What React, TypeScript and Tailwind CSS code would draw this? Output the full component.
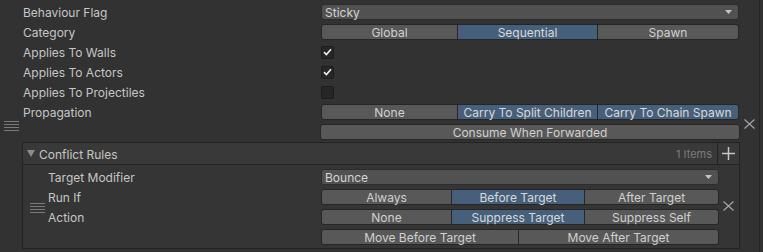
import React from "react";

const font = { fontFamily: "Inter, 'Noto Sans', sans-serif" };

function Handle() {
  return (
    <svg width="15" height="10" viewBox="0 0 15 10" className="block">
      <rect x="0" y="0" width="15" height="1" fill="#7a7a7a" />
      <rect x="0" y="3" width="15" height="1" fill="#7a7a7a" />
      <rect x="0" y="6" width="15" height="1" fill="#7a7a7a" />
      <rect x="0" y="9" width="15" height="1" fill="#7a7a7a" />
    </svg>
  );
}

function XIcon() {
  return (
    <svg width="11" height="10" viewBox="0 0 11 10" className="block">
      <path d="M0.5 0.5 L10.5 9.5 M10.5 0.5 L0.5 9.5" stroke="#a8a8a8" strokeWidth="1.1" fill="none" />
    </svg>
  );
}

function Arrow() {
  return (
    <svg width="7" height="4" viewBox="0 0 7 4" className="block">
      <path d="M0 0 L7 0 L3.5 4 Z" fill="#c4c4c4" />
    </svg>
  );
}

function Dropdown({ value }: { value: string }) {
  return (
    <div className="h-[16px] flex items-center justify-between rounded-[3px] bg-[#515151] border border-[#2c2c2c] pl-[3px] pr-[6px] text-[#d4d4d4] w-full">
      <span className="leading-none pt-[2px]">{value}</span>
      <Arrow />
    </div>
  );
}

function Segments({ items, selected, widths }: { items: string[]; selected: number[]; widths: string[] }) {
  return (
    <div className="h-[16px] flex w-full">
      {items.map((it, i) => {
        const sel = selected.includes(i);
        const first = i === 0;
        const last = i === items.length - 1;
        return (
          <div
            key={it}
            className={
              widths[i] +
              " flex items-center justify-center pt-[2px] border-y border-r border-[#262626] leading-none " +
              (first ? "border-l rounded-l-[3px] " : "") +
              (last ? "rounded-r-[3px] " : "") +
              (sel ? "bg-[#46607c] text-[#d8d8d8]" : "bg-[#585858] text-[#d0d0d0]")
            }
          >
            {it}
          </div>
        );
      })}
    </div>
  );
}

function Checkbox({ checked }: { checked: boolean }) {
  return (
    <div className="w-[13px] h-[13px] rounded-[2px] bg-[#262626] border border-[#1c1c1c] flex items-center justify-center">
      {checked && (
        <svg width="9" height="8" viewBox="0 0 9 8" className="block">
          <path d="M1 4.2 L3.4 6.5 L8 1.2" stroke="#f0f0f0" strokeWidth="1.6" fill="none" />
        </svg>
      )}
    </div>
  );
}

function Row({ label, children, labelW }: { label?: string; children: React.ReactNode; labelW: string }) {
  return (
    <div className="h-[20px] flex items-center">
      <div className={labelW + " shrink-0 text-[#c6c6c6] leading-none pt-[2px]"}>{label}</div>
      <div className="flex-1 flex items-center">{children}</div>
    </div>
  );
}

const outerW = ["w-[137px]", "w-[140px]", "flex-1"];
const innerW = ["w-[131px]", "w-[133px]", "flex-1"];

export default function App() {
  return (
    <div className="w-[763px] h-[252px] bg-[#323232] overflow-hidden text-[12px] relative" style={font}>
      <div className="absolute right-[3px] top-0 bottom-0 w-px bg-[#262626]" />
      <div className="flex items-center h-full">
        <div className="w-[22px] shrink-0 flex justify-center pl-[1px]">
          <Handle />
        </div>
        <div className="w-[718px] shrink-0 flex flex-col pt-[2px] h-full">
          <div className="pr-[1px]">
            <Row label="Behaviour Flag" labelW="w-[299px] pl-[1px]">
              <Dropdown value="Sticky" />
            </Row>
            <Row label="Category" labelW="w-[299px] pl-[1px]">
              <Segments items={["Global", "Sequential", "Spawn"]} selected={[1]} widths={outerW} />
            </Row>
            <Row label="Applies To Walls" labelW="w-[299px] pl-[1px]">
              <Checkbox checked />
            </Row>
            <Row label="Applies To Actors" labelW="w-[299px] pl-[1px]">
              <Checkbox checked />
            </Row>
            <Row label="Applies To Projectiles" labelW="w-[299px] pl-[1px]">
              <Checkbox checked={false} />
            </Row>
            <Row label="Propagation" labelW="w-[299px] pl-[1px]">
              <Segments items={["None", "Carry To Split Children", "Carry To Chain Spawn"]} selected={[1, 2]} widths={outerW} />
            </Row>
          </div>
          <div className="h-[20px] flex items-center pl-[298px]">
            <div className="h-[16px] w-full flex items-center justify-center pt-[2px] rounded-[3px] bg-[#585858] border border-[#262626] text-[#d0d0d0] leading-none">
              Consume When Forwarded
            </div>
          </div>
          <div className="border border-[#232323] flex flex-col">
            <div className="h-[22px] bg-[#393939] border-b border-[#232323] flex items-center">
              <div className="pl-[4px] pr-[4px]">
                <svg width="8" height="7" viewBox="0 0 8 7" className="block">
                  <path d="M0 0 L8 0 L4 7 Z" fill="#8c8c8c" />
                </svg>
              </div>
              <div className="text-[#c6c6c6] leading-none flex-1 pt-[2px]">Conflict Rules</div>
              <div className="text-[#7c7c7c] text-[11px] leading-none pr-[5px] pt-[2px]">1 Items</div>
              <div className="w-[22px] h-full border-l border-[#232323] flex items-center justify-center">
                <svg width="13" height="13" viewBox="0 0 13 13" className="block">
                  <path d="M6.5 0 V13 M0 6.5 H13" stroke="#c8c8c8" strokeWidth="1.5" fill="none" />
                </svg>
              </div>
            </div>
            <div className="bg-[#353535] flex items-center pt-[2px] pb-[1px]">
              <div className="w-[25px] shrink-0 flex justify-end pr-[3px] pt-[2px]">
                <Handle />
              </div>
              <div className="w-[671px] shrink-0 flex flex-col">
                <Row label="Target Modifier" labelW="w-[273px]">
                  <Dropdown value="Bounce" />
                </Row>
                <Row label="Run If" labelW="w-[273px]">
                  <Segments items={["Always", "Before Target", "After Target"]} selected={[1]} widths={innerW} />
                </Row>
                <Row label="Action" labelW="w-[273px]">
                  <Segments items={["None", "Suppress Target", "Suppress Self"]} selected={[1]} widths={innerW} />
                </Row>
                <Row labelW="w-[273px]">
                  <Segments items={["Move Before Target", "Move After Target"]} selected={[]} widths={["w-[198px]", "flex-1"]} />
                </Row>
              </div>
              <div className="flex-1 flex justify-center pr-[1px] pb-[3px]">
                <XIcon />
              </div>
            </div>
          </div>
        </div>
        <div className="flex-1 flex justify-center pr-[4px] pb-[4px]">
          <XIcon />
        </div>
      </div>
    </div>
  );
}
